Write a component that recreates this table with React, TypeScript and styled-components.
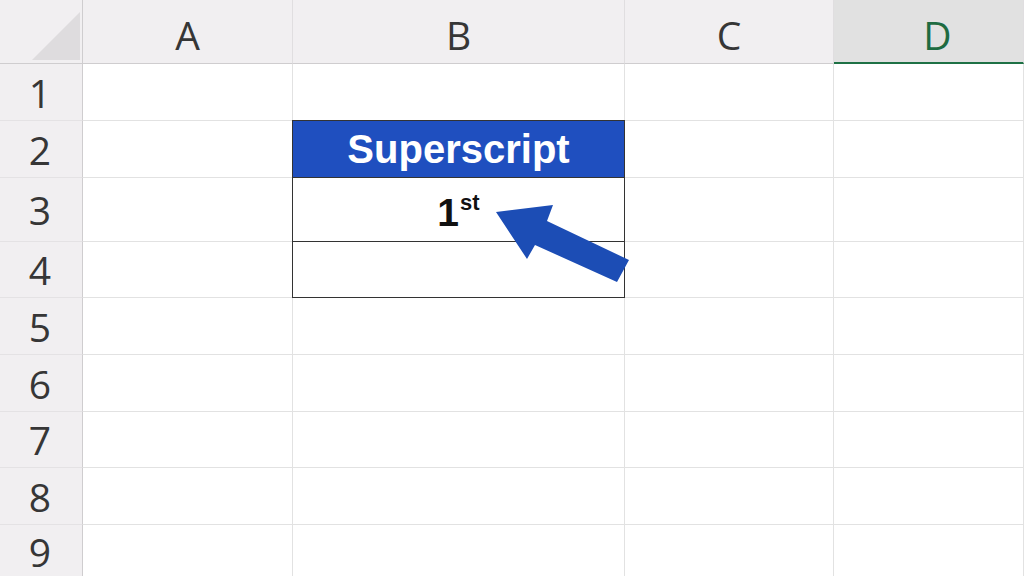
import React from 'react'
import styled, { createGlobalStyle } from 'styled-components'

const COLUMNS = ['A', 'B', 'C', 'D']
const ROWS = [1, 2, 3, 4, 5, 6, 7, 8, 9]
const ROW_HEIGHTS = ['57px', '57px', '64px', '56px', '57px', '57px', '56px', '57px', '1fr']

const GlobalStyle = createGlobalStyle`
    html, body, #root {
        margin: 0;
        padding: 0;
        width: 100%;
        height: 100%;
        overflow: hidden;
        background: #ffffff;
    }
`

const Sheet = styled.div`
    position: relative;
    width: 1024px;
    height: 576px;
    display: grid;
    grid-template-columns: 83px 210px 332px 209px 1fr;
    grid-template-rows: 64px ${ROW_HEIGHTS.join(' ')};
    font-family: 'Open Sans', 'Noto Sans', sans-serif;
    background: #ffffff;
`

const Corner = styled.div`
    position: relative;
    background: #f1eff1;
    border-right: 1px solid #cfcdcf;
    border-bottom: 1px solid #cfcdcf;
`

const CornerTriangle = styled.svg`
    position: absolute;
    left: 0;
    top: 0;
`

const ColumnHeader = styled.div<{ selected?: boolean }>`
    display: flex;
    align-items: center;
    justify-content: center;
    padding-top: 6px;
    padding-left: ${(p) => (p.selected ? '18px' : '0')};
    box-sizing: border-box;
    background: ${(p) => (p.selected ? '#e1e1e1' : '#f1eff1')};
    border-right: 1px solid #e0dee0;
    border-bottom: ${(p) => (p.selected ? '2px solid #1e7145' : '1px solid #cfcdcf')};
    color: ${(p) => (p.selected ? '#1e6b41' : '#363636')};
    font-size: 39px;
    font-weight: 400;
`

const RowHeader = styled.div`
    display: flex;
    align-items: center;
    justify-content: center;
    background: #f1eff1;
    border-right: 1px solid #cfcdcf;
    border-bottom: 1px solid #e4e2e4;
    color: #363636;
    font-size: 39px;
    font-weight: 400;
    padding-right: 2px;
`

const Cell = styled.div`
    border-right: 1px solid #e2e2e2;
    border-bottom: 1px solid #e2e2e2;
`

const Table = styled.div`
    grid-column: 3;
    grid-row: 3 / 6;
    margin: -1px 0 0 -1px;
    display: grid;
    grid-template-rows: 57px 64px 1fr;
    border: 1.5px solid #333333;
    z-index: 1;
    background: #ffffff;
    font-family: 'Liberation Sans', Arial, sans-serif;
`

const TableHead = styled.div`
    display: flex;
    align-items: center;
    justify-content: center;
    background: #1f4fbf;
    color: #ffffff;
    font-size: 40px;
    font-weight: 700;
    border-bottom: 1.5px solid #333333;
`

const TableCell = styled.div<{ last?: boolean }>`
    display: flex;
    align-items: center;
    justify-content: center;
    border-bottom: ${(p) => (p.last ? 'none' : '1.5px solid #333333')};
    color: #111111;
    font-size: 39px;
    font-weight: 700;
    padding-top: 6px;

    & sup {
        font-size: 22px;
        line-height: 0;
        position: relative;
        top: -10px;
        margin-left: 1px;
    }
`

const Arrow = styled.svg`
    position: absolute;
    left: 0;
    top: 0;
    z-index: 2;
    pointer-events: none;
`

export default function App() {
    return (
        <>
            <GlobalStyle />
            <Sheet>
                <Corner>
                    <CornerTriangle width="82" height="63">
                        <polygon points="80,12 80,60 32,60" fill="#dedcde" />
                    </CornerTriangle>
                </Corner>
                {COLUMNS.map((c) => (
                    <ColumnHeader key={c} selected={c === 'D'}>
                        {c}
                    </ColumnHeader>
                ))}
                {ROWS.map((r) => (
                    <React.Fragment key={r}>
                        <RowHeader>{r}</RowHeader>
                        <Cell />
                        {r < 2 || r > 4 ? <Cell /> : r === 2 ? (
                            <Table>
                                <TableHead>Superscript</TableHead>
                                <TableCell>
                                    1<sup>st</sup>
                                </TableCell>
                                <TableCell last />
                            </Table>
                        ) : null}
                        <Cell />
                        <Cell />
                    </React.Fragment>
                ))}
                <Arrow width="1024" height="576" viewBox="0 0 1024 576">
                    <polygon
                        points="496,212 553,205 547,221 629,260 617,282 535,245 527,259"
                        fill="#1c4db5"
                    />
                </Arrow>
            </Sheet>
        </>
    )
}
